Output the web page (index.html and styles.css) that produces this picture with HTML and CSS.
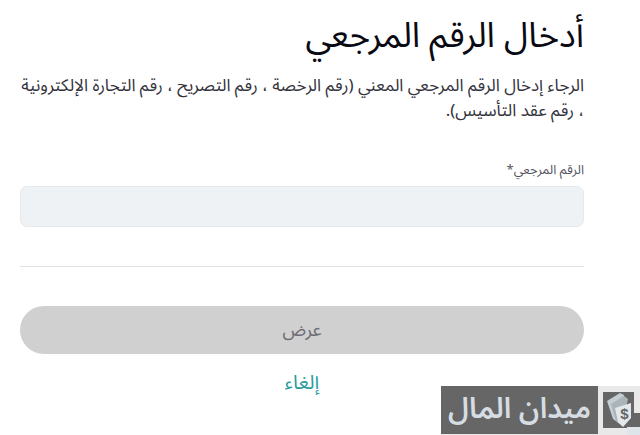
FILE: index.html
```html
<!DOCTYPE html>
<html lang="ar" dir="rtl">
<head>
    <meta charset="UTF-8">
    <meta name="viewport" content="width=device-width, initial-scale=1.0">
    <title>أدخال الرقم المرجعي</title>
    <link rel="stylesheet" href="styles.css">
</head>
<body>
    <div class="container">
        <h1>أدخال الرقم المرجعي</h1>
        <p class="intro">الرجاء إدخال الرقم المرجعي المعني (رقم الرخصة ، رقم التصريح ، رقم التجارة الإلكترونية ، رقم عقد التأسيس).</p>

        <label class="field-label" for="ref">الرقم المرجعي*</label>
        <input id="ref" class="field" type="text">

        <hr class="divider">

        <button class="btn" type="button">عرض</button>
        <a class="cancel" href="#">إلغاء</a>
    </div>

    <div class="watermark">
        <svg class="watermark-icon" width="42" height="49" viewBox="0 0 42 49">
            <rect x="5" y="6" width="31" height="36" fill="#666666"/>
            <rect x="36" y="27" width="6" height="14" fill="#666666"/>
            <rect x="29" y="41" width="13" height="8" fill="#dfe6ea"/>
            <path d="M9 15 L22 7 L26 9 L22 38 L15 33 Z" fill="#c3cdd2"/>
            <path d="M13 18 L26 10 L30 13 L24 40 L18 35 Z" fill="#aab5bb"/>
            <path d="M17 22 L33 17 L33 32 L25 41 L20 36 Z" fill="#e3e8eb"/>
            <text x="26.5" y="33" class="dollar">$</text>
        </svg>
        <div class="watermark-text">ميدان المال</div>
    </div>
</body>
</html>
```

FILE: styles.css
```css
body {
    margin: 0;
    background: #ffffff;
    font-family: "Noto Sans Arabic", "Noto Sans", sans-serif;
    color: #212529;
}
.container {
    height: 435px;
    box-sizing: border-box;
    padding: 10px 56px 0 20px;
}
h1 {
    margin: 0;
    font-size: 35px;
    font-weight: 400;
    line-height: 52px;
    color: #0a0a14;
}
.intro {
    margin: 12px 0 0;
    font-size: 17px;
    line-height: 25px;
    color: #33333d;
}
.field-label {
    display: block;
    margin-top: 38px;
    font-size: 13px;
    line-height: 16px;
    color: #55555f;
}
.field {
    display: block;
    width: 100%;
    height: 41px;
    box-sizing: border-box;
    margin-top: 8px;
    background: #eff2f5;
    border: 1px solid #e6e9ec;
    border-radius: 7px;
}
.divider {
    margin: 39px 0 0;
    border: none;
    border-top: 1px solid #e2e2e2;
}
.btn {
    display: block;
    width: 100%;
    height: 48px;
    margin-top: 39px;
    background: #d0d0d0;
    border: none;
    border-radius: 24px;
    font-family: inherit;
    font-size: 18px;
    line-height: 24px;
    color: #6b6b76;
}
.cancel {
    display: block;
    margin-top: 16px;
    text-align: center;
    font-size: 20px;
    line-height: 26px;
    color: #2b9c9c;
    text-decoration: none;
}
.watermark {
    position: absolute;
    left: 441px;
    top: 386px;
    width: 199px;
    height: 49px;
    display: flex;
    background: #e9e9e9;
}
.watermark-icon {
    flex: none;
}
.dollar {
    font-family: "Liberation Sans", sans-serif;
    font-size: 15px;
    font-weight: 700;
    fill: #666666;
    text-anchor: middle;
}
.watermark-text {
    width: 157px;
    height: 48px;
    background: #666666;
    color: #d5dde3;
    font-size: 29px;
    font-weight: 600;
    line-height: 46px;
    text-align: center;
    white-space: nowrap;
}
```
